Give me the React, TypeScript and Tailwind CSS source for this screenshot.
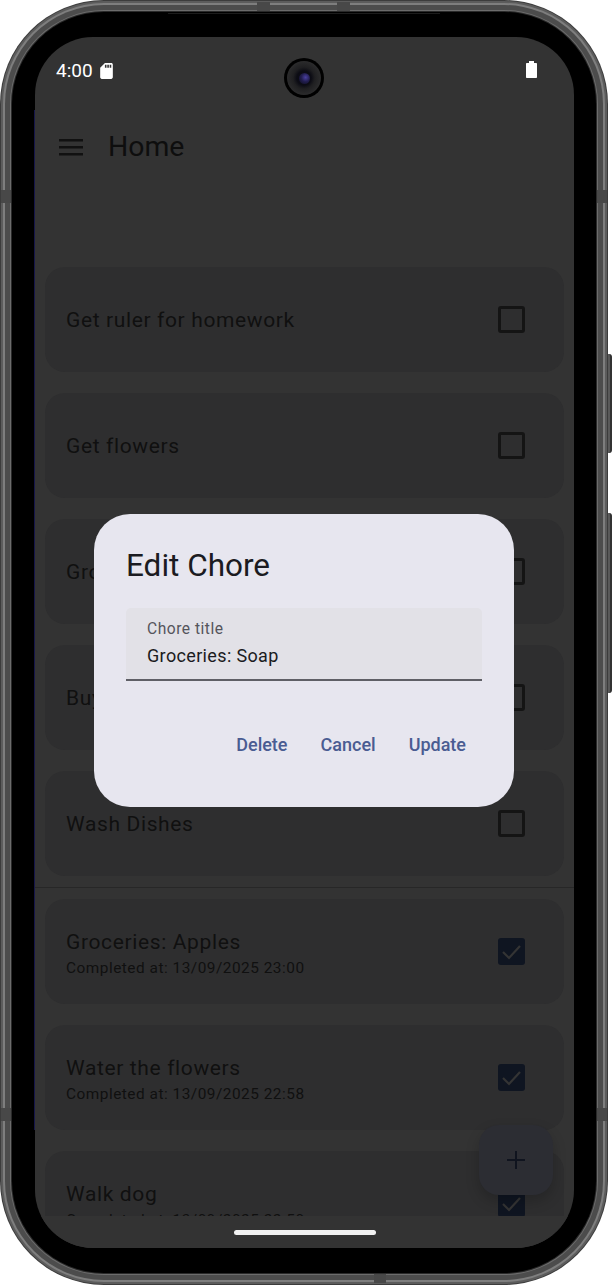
import React from "react";

const font = { fontFamily: "Roboto, sans-serif" };

function Row({ title, sub, checked }: { title: string; sub?: string; checked?: boolean }) {
  return (
    <div className="mx-[10px] h-[105px] shrink-0 rounded-[20px] bg-[#2e2e2f] pl-[21px] pr-[39px] flex items-center justify-between">
      <div className={sub ? "flex flex-col pt-[6px]" : "flex flex-col"}>
        <div className="text-[21px] leading-[26px] tracking-[0.63px] text-[#101010]">{title}</div>
        {sub && <div className="text-[15.4px] leading-[26px] tracking-[0.5px] text-[#101010]">{sub}</div>}
      </div>
      {checked ? (
        <div className="w-[27px] h-[27px] rounded-[3px] bg-[#0f1521] flex items-center justify-center">
          <svg width="27" height="27" viewBox="0 0 27 27" fill="none">
            <path d="M5 14l6 6L22 8" stroke="#343434" strokeWidth="2.2" />
          </svg>
        </div>
      ) : (
        <div className="w-[27px] h-[27px] rounded-[3px] border-[3px] border-[#141414]" />
      )}
    </div>
  );
}

export default function App() {
  return (
    <div className="relative w-[612px] h-[1285px] bg-white overflow-hidden" style={font}>
      {/* side buttons */}
      <div className="absolute left-[604px] top-[354px] w-[8px] h-[99px] rounded-r-[3px] bg-[#5a5a5a] border-r-2 border-[#333]" />
      <div className="absolute left-[604px] top-[513px] w-[8px] h-[180px] rounded-r-[3px] bg-[#5a5a5a] border-r-2 border-[#333]" />

      {/* body */}
      <div className="relative w-[608px] h-[1285px] rounded-[104px] bg-[#3c3c3c] p-[1px]">
        <div className="h-full rounded-[103px] bg-[#5c5c5c] p-[2px]">
          <div className="h-full rounded-[101px] bg-[#7e7e7e] p-[2px]">
            <div className="h-full rounded-[99px] bg-[#4c4c4c] p-[5px]">
              <div className="h-full rounded-[94px] bg-[#6c6c6c] p-[1px]">
                <div className="h-full rounded-[93px] bg-[#2a2a2a] p-[1px]">
                  <div className="h-full rounded-[92px] bg-black pt-[25px] pl-[23px] pr-[22px] pb-[25px]">
                    {/* screen */}
                    <div className="relative w-[539px] h-[1211px] rounded-[58px] bg-[#333333] overflow-hidden flex flex-col">
                      {/* status bar */}
                      <div className="h-[70px] shrink-0 pl-[21px] pr-[37px] pt-[23px] flex items-start justify-between">
                        <div className="flex items-center gap-[4px]">
                          <span className="text-[19px] leading-[22px] text-white">4:00</span>
                          <svg width="19" height="20" viewBox="0 0 24 24" fill="#fff">
                            <path d="M18 2h-8L4.02 8 4 20c0 1.1.9 2 2 2h12c1.1 0 2-.9 2-2V4c0-1.1-.9-2-2-2zm-6 6h-2V4h2v4zm3 0h-2V4h2v4zm3 0h-2V4h2v4z" />
                          </svg>
                        </div>
                        <svg width="11" height="17" viewBox="0 0 11 17" fill="#fff" className="mt-px">
                          <path d="M3 0h5v2h2c.6 0 1 .4 1 1v13c0 .6-.4 1-1 1H1c-.6 0-1-.4-1-1V3c0-.6.4-1 1-1h2z" />
                        </svg>
                      </div>

                      {/* top bar */}
                      <div className="h-[160px] shrink-0 pl-[24px] pt-[21px] flex items-start gap-[25px]">
                        <svg width="24" height="38" viewBox="0 0 24 38" fill="#111">
                          <rect y="11" width="24" height="2.5" />
                          <rect y="18" width="24" height="2.5" />
                          <rect y="25" width="24" height="2.5" />
                        </svg>
                        <div className="text-[28.4px] leading-[38px] text-[#0e0e0e]">Home</div>
                      </div>

                      {/* list */}
                      <div className="flex-1 min-h-0 overflow-hidden flex flex-col gap-[21px]">
                        <Row title="Get ruler for homework" />
                        <Row title="Get flowers" />
                        <Row title="Groceries: Soap" />
                        <Row title="Buy milk" />
                        <Row title="Wash Dishes" />
                        <div className="h-px shrink-0 -my-[10px] bg-[#272727]" />
                        <Row title="Groceries: Apples" sub="Completed at: 13/09/2025 23:00" checked />
                        <Row title="Water the flowers" sub="Completed at: 13/09/2025 22:58" checked />
                        <Row title="Walk dog" sub="Completed at: 13/09/2025 22:50" checked />
                      </div>

                      {/* gesture bar */}
                      <div className="h-[32px] shrink-0 bg-[#333333] flex justify-center pt-[14px]">
                        <div className="w-[142px] h-[5px] rounded-full bg-[#f2f2f2]" />
                      </div>

                      {/* fab */}
                      <div className="absolute left-[444px] top-[1088px] w-[74px] h-[70px] rounded-[20px] bg-[#2c2d33] shadow-[0_6px_14px_rgba(0,0,0,0.2)] flex items-center justify-center">
                        <svg width="24" height="24" viewBox="0 0 24 24" stroke="#10141f" strokeWidth="2" fill="none">
                          <path d="M12 3v18M3 12h18" />
                        </svg>
                      </div>

                      {/* dialog */}
                      <div className="absolute left-[59px] top-[477px] w-[420px] h-[293px] rounded-[36px] bg-[#e7e6ef] pl-[32px] pr-[32px] pt-[32px]">
                        <div className="text-[31.5px] leading-[40px] text-[#1b1b21]">Edit Chore</div>
                        <div className="mt-[22px] h-[73px] rounded-t-[5px] bg-[#e2e1e7] border-b-2 border-[#5f5f66] pl-[21px] pt-[11px]">
                          <div className="text-[15.6px] leading-[20px] tracking-[0.5px] text-[#55555c]">Chore title</div>
                          <div className="mt-[4px] text-[18px] leading-[26px] tracking-[0.35px] text-[#1b1b21]">Groceries: Soap</div>
                        </div>
                        <div className="mt-[51px] pr-[16px] flex justify-end gap-[33px] text-[18px] leading-[26px] font-medium text-[#4a5c92]">
                          <span>Delete</span>
                          <span>Cancel</span>
                          <span>Update</span>
                        </div>
                      </div>
                    </div>
                  </div>
                </div>
              </div>
            </div>
          </div>
        </div>
      </div>

      {/* frame antenna bands */}
      <div className="absolute left-[257px] top-[2px] w-[13px] h-[9px] bg-[#484848]" />
      <div className="absolute left-[337px] top-[2px] w-[13px] h-[9px] bg-[#484848]" />
      <div className="absolute left-[374px] top-[1274px] w-[12px] h-[9px] bg-[#484848]" />
      <div className="absolute left-[1px] top-[190px] w-[10px] h-[13px] bg-[#484848]" />
      <div className="absolute left-[1px] top-[1108px] w-[10px] h-[13px] bg-[#484848]" />
      <div className="absolute left-[597px] top-[190px] w-[10px] h-[13px] bg-[#484848]" />
      <div className="absolute left-[597px] top-[1108px] w-[10px] h-[13px] bg-[#484848]" />

      {/* earpiece line and edge line */}
      <div className="absolute left-[168px] top-[13px] w-[272px] h-px bg-[#1c1c1c]" />
      <div className="absolute left-[34px] top-[110px] w-px h-[1020px] bg-[#16164a]" />

      {/* camera */}
      <div className="absolute left-[284px] top-[58px] w-[40px] h-[40px] rounded-full bg-black p-[3px]">
        <div className="w-full h-full rounded-full bg-[radial-gradient(circle,#0c0c14_0%,#0c0c14_30%,#1f1f21_45%,#2b2b2c_70%,#101010_100%)] flex items-center justify-center">
          <div className="w-[11px] h-[11px] rounded-full bg-[radial-gradient(circle_at_60%_40%,#4a40a0_0%,#221e50_45%,#0c0c18_100%)]" />
        </div>
      </div>
    </div>
  );
}
